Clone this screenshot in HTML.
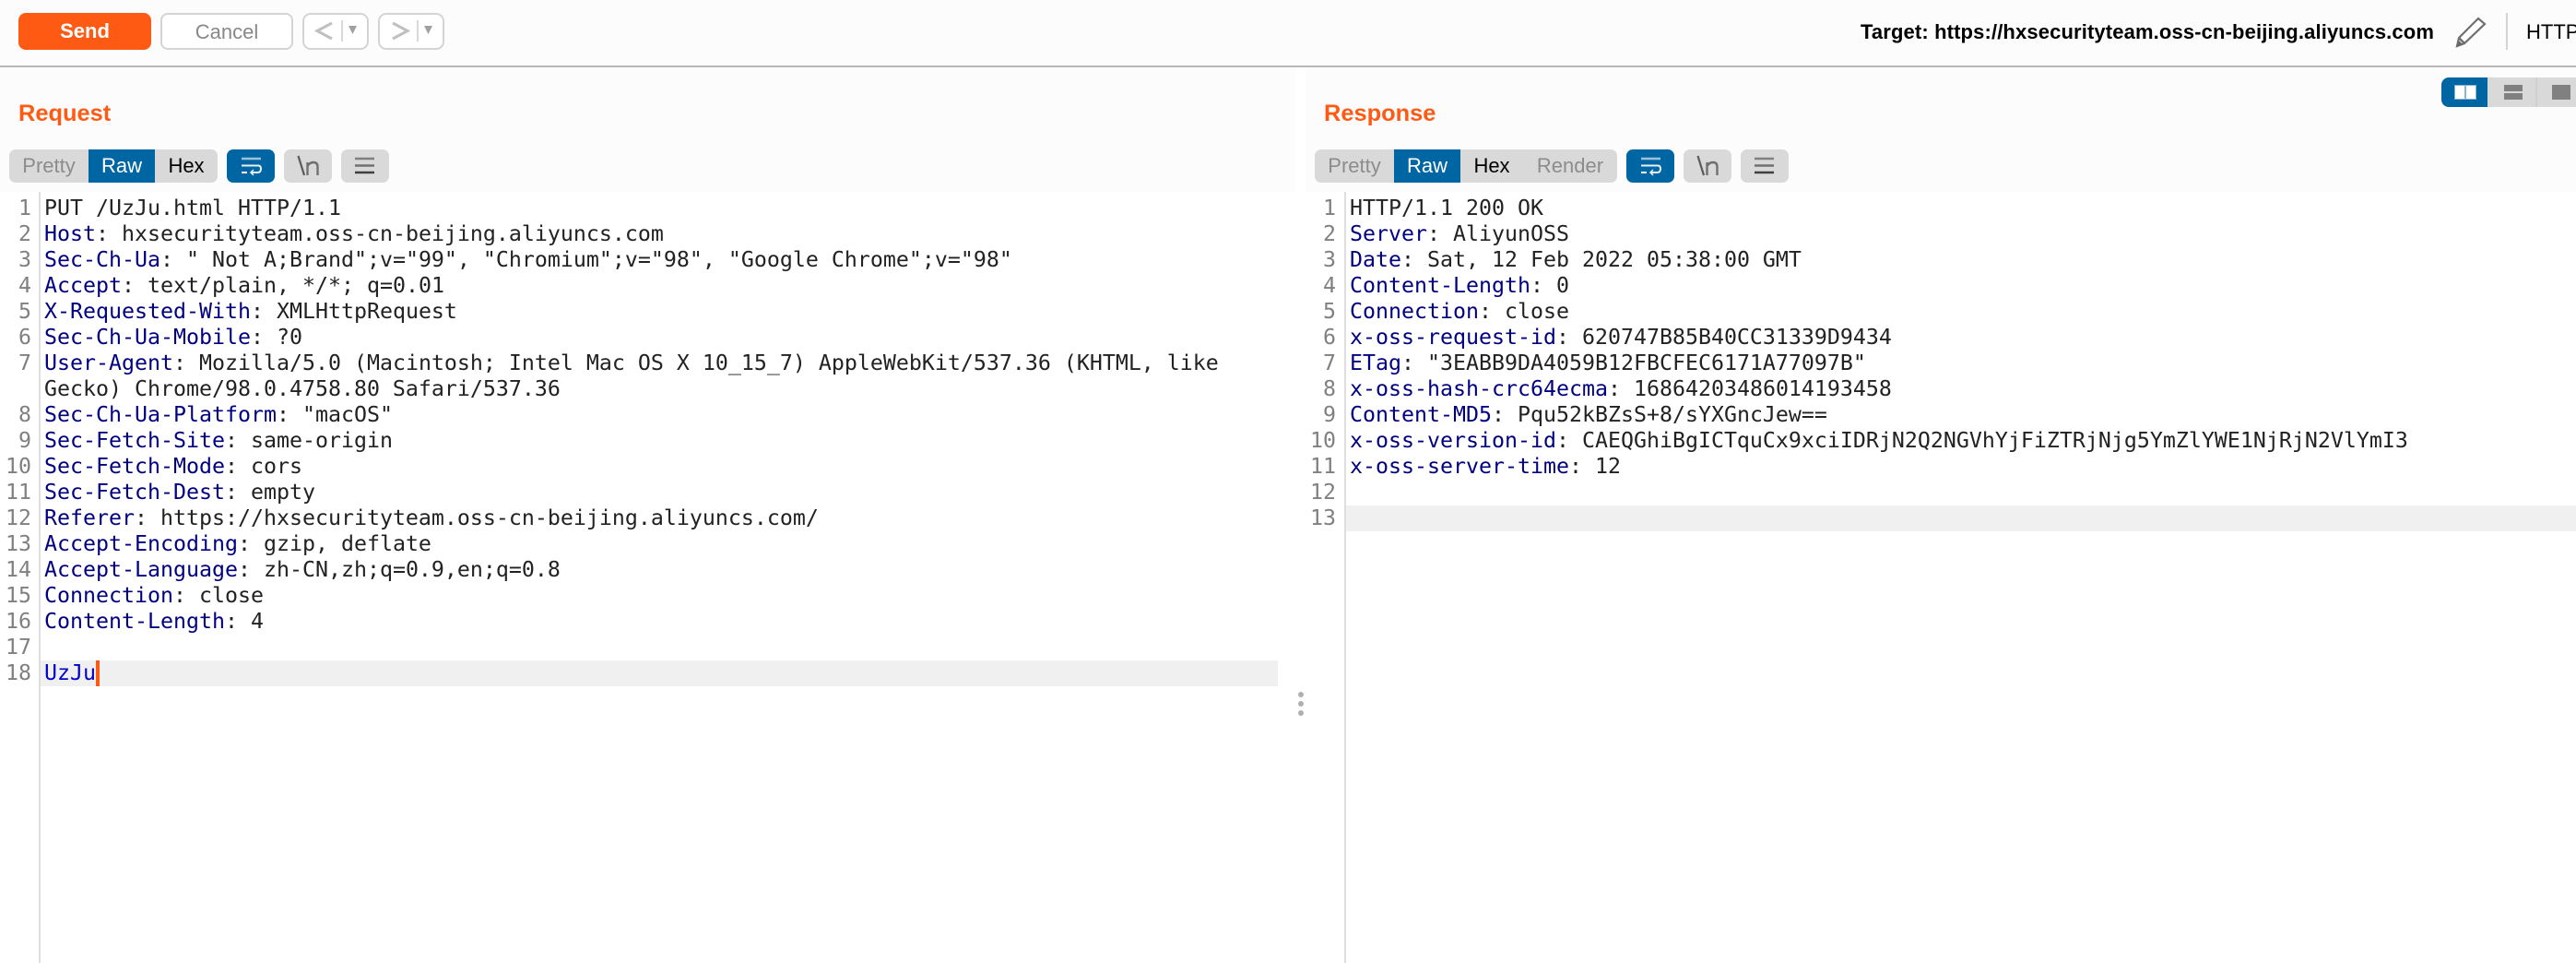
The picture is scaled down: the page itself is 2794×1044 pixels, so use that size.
<!DOCTYPE html>
<html><head><meta charset="utf-8">
<style>
html,body{margin:0;padding:0}
body{width:2794px;height:1044px;overflow:hidden;background:#fff;position:relative;font-family:"Liberation Sans",sans-serif}
.a{position:absolute;box-sizing:border-box;white-space:pre}
.btn{border-radius:8px;text-align:center;font-size:22px;line-height:40px}
.tab{top:162px;height:36px;line-height:36px;font-size:22px;text-align:center;background:#d9d9d9}
.sq{top:162px;height:36px;width:52px;background:#d9d9d9;border-radius:7px}
.sq svg{position:absolute;left:0;top:0}
.title{color:#ff5a14;font-weight:bold;font-size:25.4px;line-height:30px}
pre{margin:0;position:absolute;font-family:"DejaVu Sans Mono","Liberation Mono",monospace;font-size:23.25px;line-height:28px;color:#222}
pre.n{color:#808080;text-align:right}
b{font-weight:normal;color:#000080}
i{font-style:normal;color:#0000d0}
</style></head><body>
<div class="a" style="left:0;top:0;width:2794px;height:71px;background:#fcfcfc"></div>
<div class="a" style="left:0;top:71px;width:2794px;height:2px;background:#bdb8b8"></div>
<div class="a" style="left:0;top:73px;width:1406px;height:135px;background:#fcfcfc"></div>
<div class="a" style="left:1416px;top:73px;width:1378px;height:135px;background:#fcfcfc"></div>

<div class="a btn" style="left:20px;top:14px;width:144px;height:40px;background:#ff5a14;color:#fff;font-weight:bold">Send</div>
<div class="a btn" style="left:174px;top:14px;width:144px;height:40px;background:#fff;border:2px solid #d4d4d4;color:#888;line-height:37px">Cancel</div>
<svg class="a" style="left:328px;top:14px" width="72" height="40" viewBox="0 0 72 40"><rect x="1" y="1" width="70" height="38" rx="8" fill="#fff" stroke="#d4d4d4" stroke-width="2"/><path d="M32 11L16 19.500L32 28" fill="none" stroke="#c0c0c0" stroke-width="3"/><path d="M43 8V31" stroke="#d8d8d8" stroke-width="2"/><path d="M50 14H59L54.500 23Z" fill="#a0a0a0"/></svg>
<svg class="a" style="left:410px;top:14px" width="72" height="40" viewBox="0 0 72 40"><rect x="1" y="1" width="70" height="38" rx="8" fill="#fff" stroke="#d4d4d4" stroke-width="2"/><path d="M16 11L32 19.500L16 28" fill="none" stroke="#c0c0c0" stroke-width="3"/><path d="M43 8V31" stroke="#d8d8d8" stroke-width="2"/><path d="M50 14H59L54.500 23Z" fill="#a0a0a0"/></svg>

<div class="a" style="left:2018px;top:22px;font-size:22px;line-height:26px;font-weight:bold;color:#000;letter-spacing:.13px">Target: https://hxsecurityteam.oss-cn-beijing.aliyuncs.com</div>
<svg class="a" style="left:2660px;top:16px" width="38" height="36" viewBox="0 0 38 36"><path d="M28 4L35 10L13 31L5 34L7 25Z" fill="#fff" stroke="#707070" stroke-width="2.200"/><path d="M7 25L13 31" stroke="#707070" stroke-width="2.500"/><path d="M4 35L7 28L11 32Z" fill="#666"/></svg>
<div class="a" style="left:2718px;top:14px;width:2px;height:40px;background:#d4d4d4"></div>
<div class="a" style="left:2740px;top:22px;font-size:22px;line-height:26px;color:#000">HTTP</div>

<div class="a" style="left:2648px;top:84px;width:50px;height:32px;background:#0065a3;border-radius:8px 0 0 8px"></div>
<div class="a" style="left:2698px;top:84px;width:96px;height:32px;background:#d9d9d9"></div>
<div class="a" style="left:2750px;top:84px;width:2px;height:32px;background:#cfcfcf"></div>
<svg class="a" style="left:2648px;top:84px" width="146" height="32" viewBox="0 0 146 32"><rect x="14" y="8" width="24" height="16" fill="#8ab4d0"/><rect x="15" y="9" width="10" height="14" fill="#fff"/><rect x="27" y="9" width="10" height="14" fill="#fff"/><rect x="68" y="8" width="20" height="7" fill="#808080"/><rect x="68" y="17" width="20" height="7" fill="#808080"/><rect x="120" y="8" width="20" height="16" fill="#808080"/></svg>

<div class="a title" style="left:20px;top:108px">Request</div>
<div class="a title" style="left:1436px;top:108px">Response</div>

<div class="a tab" style="left:10px;width:86px;border-radius:7px 0 0 7px;color:#8c8c8c">Pretty</div>
<div class="a tab" style="left:96px;width:72px;background:#0065a3;color:#fff">Raw</div>
<div class="a tab" style="left:168px;width:68px;border-radius:0 7px 7px 0;color:#000">Hex</div>
<div class="a sq" style="left:246px;background:#0065a3"><svg width="52" height="36" viewBox="0 0 52 36"><path d="M16 10H37" stroke="#9cc2db" stroke-width="2.400"/><path d="M16 17.500H34Q37 17.500 37 21Q37 25 33 25H26" fill="none" stroke="#e8f1f7" stroke-width="2"/><path d="M29 22L26 25L29 28" fill="none" stroke="#e8f1f7" stroke-width="1.500"/><path d="M16 25H22" stroke="#fff" stroke-width="2"/></svg></div>
<div class="a sq" style="left:308px"><svg width="52" height="36" viewBox="0 0 52 36"><path d="M15.500 7L22 28" stroke="#5c5c5c" stroke-width="2.200"/><path d="M25.500 28V14M25.500 18Q28 14 32 14Q36.500 14 36.500 19V28" fill="none" stroke="#707070" stroke-width="2.400"/></svg></div>
<div class="a sq" style="left:370px"><svg width="52" height="36" viewBox="0 0 52 36"><path d="M15 10H36" stroke="#808080" stroke-width="2.600"/><path d="M15 17.500H36" stroke="#707070" stroke-width="2.600"/><path d="M15 25H36" stroke="#404040" stroke-width="2.600"/></svg></div>

<div class="a tab" style="left:1426px;width:86px;border-radius:7px 0 0 7px;color:#8c8c8c">Pretty</div>
<div class="a tab" style="left:1512px;width:72px;background:#0065a3;color:#fff">Raw</div>
<div class="a tab" style="left:1584px;width:68px;color:#000">Hex</div>
<div class="a tab" style="left:1652px;width:102px;border-radius:0 7px 7px 0;color:#8c8c8c">Render</div>
<div class="a sq" style="left:1764px;background:#0065a3"><svg width="52" height="36" viewBox="0 0 52 36"><path d="M16 10H37" stroke="#9cc2db" stroke-width="2.400"/><path d="M16 17.500H34Q37 17.500 37 21Q37 25 33 25H26" fill="none" stroke="#e8f1f7" stroke-width="2"/><path d="M29 22L26 25L29 28" fill="none" stroke="#e8f1f7" stroke-width="1.500"/><path d="M16 25H22" stroke="#fff" stroke-width="2"/></svg></div>
<div class="a sq" style="left:1826px"><svg width="52" height="36" viewBox="0 0 52 36"><path d="M15.500 7L22 28" stroke="#5c5c5c" stroke-width="2.200"/><path d="M25.500 28V14M25.500 18Q28 14 32 14Q36.500 14 36.500 19V28" fill="none" stroke="#707070" stroke-width="2.400"/></svg></div>
<div class="a sq" style="left:1888px"><svg width="52" height="36" viewBox="0 0 52 36"><path d="M15 10H36" stroke="#808080" stroke-width="2.600"/><path d="M15 17.500H36" stroke="#707070" stroke-width="2.600"/><path d="M15 25H36" stroke="#404040" stroke-width="2.600"/></svg></div>

<div class="a" style="left:42px;top:208px;width:2px;height:836px;background:#dedede"></div>
<div class="a" style="left:1458px;top:208px;width:2px;height:836px;background:#dedede"></div>
<div class="a" style="left:44px;top:716px;width:1342px;height:28px;background:#f0f0f0"></div>
<div class="a" style="left:1460px;top:548px;width:1334px;height:28px;background:#f0f0f0"></div>
<div class="a" style="left:104px;top:716px;width:4px;height:28px;background:#ff5a14"></div>
<div class="a" style="left:1408px;top:750px;width:6px;height:6px;border-radius:50%;background:#b0b0b0"></div>
<div class="a" style="left:1408px;top:760px;width:6px;height:6px;border-radius:50%;background:#b0b0b0"></div>
<div class="a" style="left:1408px;top:770px;width:6px;height:6px;border-radius:50%;background:#b0b0b0"></div>

<pre class="n" style="left:0;top:212px;width:34px">1
2
3
4
5
6
7

8
9
10
11
12
13
14
15
16
17
18</pre>
<pre style="left:48px;top:212px">PUT /UzJu.html HTTP/1.1
<b>Host</b>: hxsecurityteam.oss-cn-beijing.aliyuncs.com
<b>Sec-Ch-Ua</b>: " Not A;Brand";v="99", "Chromium";v="98", "Google Chrome";v="98"
<b>Accept</b>: text/plain, */*; q=0.01
<b>X-Requested-With</b>: XMLHttpRequest
<b>Sec-Ch-Ua-Mobile</b>: ?0
<b>User-Agent</b>: Mozilla/5.0 (Macintosh; Intel Mac OS X 10_15_7) AppleWebKit/537.36 (KHTML, like
Gecko) Chrome/98.0.4758.80 Safari/537.36
<b>Sec-Ch-Ua-Platform</b>: "macOS"
<b>Sec-Fetch-Site</b>: same-origin
<b>Sec-Fetch-Mode</b>: cors
<b>Sec-Fetch-Dest</b>: empty
<b>Referer</b>: https://hxsecurityteam.oss-cn-beijing.aliyuncs.com/
<b>Accept-Encoding</b>: gzip, deflate
<b>Accept-Language</b>: zh-CN,zh;q=0.9,en;q=0.8
<b>Connection</b>: close
<b>Content-Length</b>: 4

<i>UzJu</i></pre>

<pre class="n" style="left:1400px;top:212px;width:49px">1
2
3
4
5
6
7
8
9
10
11
12
13</pre>
<pre style="left:1464px;top:212px">HTTP/1.1 200 OK
<b>Server</b>: AliyunOSS
<b>Date</b>: Sat, 12 Feb 2022 05:38:00 GMT
<b>Content-Length</b>: 0
<b>Connection</b>: close
<b>x-oss-request-id</b>: 620747B85B40CC31339D9434
<b>ETag</b>: "3EABB9DA4059B12FBCFEC6171A77097B"
<b>x-oss-hash-crc64ecma</b>: 16864203486014193458
<b>Content-MD5</b>: Pqu52kBZsS+8/sYXGncJew==
<b>x-oss-version-id</b>: CAEQGhiBgICTquCx9xciIDRjN2Q2NGVhYjFiZTRjNjg5YmZlYWE1NjRjN2VlYmI3
<b>x-oss-server-time</b>: 12</pre>
</body></html>
